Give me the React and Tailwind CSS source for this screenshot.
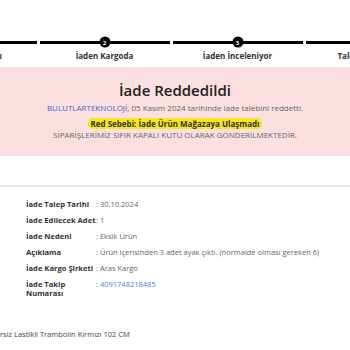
import React from 'react';

const STEPS = [
  { no: 1, label: 'Talebiniz Alındı' },
  { no: 2, label: 'İaden Kargoda' },
  { no: 3, label: 'İaden İnceleniyor' },
  { no: 4, label: 'Talep Reddedildi' },
];

const DETAILS = [
  { label: 'İade Talep Tarihi', value: '30.10.2024' },
  { label: 'İade Edilecek Adet', value: '1' },
  { label: 'İade Nedeni', value: 'Eksik Ürün' },
  { label: 'Açıklama', value: 'Ürün içerisinden 3 adet ayak çıktı. (normalde olması gereken 6)' },
  { label: 'İade Kargo Şirketi', value: 'Aras Kargo' },
  { label: 'İade Takip', label2: 'Numarası', value: '4091748218485', link: true },
];

const App = () => {
  return (
    <div className="w-[350px] h-[350px] overflow-hidden bg-white" style={{ fontFamily: '"Open Sans", "Liberation Sans", sans-serif' }}>
      {/* Stepper */}
      <div className="pt-[36px] h-[67px] overflow-hidden">
        <div className="flex ml-[-95px]">
          {STEPS.map(step => (
            <div key={step.no} className="w-[133px] shrink-0 flex flex-col items-center">
              <div className="relative w-full h-[12px] flex items-center px-[1.5px]">
                <div className="w-full h-[3px] bg-black"></div>
                <div className="absolute left-1/2 top-1/2 -translate-x-1/2 -translate-y-1/2 w-[11px] h-[11px] rounded-full bg-black flex items-center justify-center text-white text-[6px] font-bold leading-none">
                  {step.no}
                </div>
              </div>
              <span className="mt-[2px] text-[8px] font-bold text-[#333] leading-[11px] whitespace-nowrap">{step.label}</span>
            </div>
          ))}
        </div>
      </div>

      {/* Rejected box */}
      <div className="bg-[#fbdfe1] pt-[13px] pb-[16px] flex flex-col items-center text-center">
        <h2 className="text-[15px] font-semibold text-[#222] leading-[20px]">İade Reddedildi</h2>
        <p className="mt-[2px] text-[8px] text-[#666] leading-[11px]">
          <span className="text-[#4a66c8]">BULUTLARTEKNOLOJİ</span>, 05 Kasım 2024 tarihinde iade talebini reddetti.
        </p>
        <p className="mt-[5px] text-[8px] font-bold text-[#333] leading-[11px] bg-[#f6e71a] px-[3px] rounded-[5px]">
          Red Sebebi: İade Ürün Mağazaya Ulaşmadı
        </p>
        <p className="text-[8px] text-[#666] leading-[11px]">SİPARİŞLERİMİZ SIFIR KAPALI KUTU OLARAK GÖNDERİLMEKTEDİR.</p>
      </div>

      {/* Details */}
      <div className="mt-[29px] border-t-2 border-[#ececec] pt-[13px] pl-[26px] flex flex-col gap-[7px]">
        {DETAILS.map(row => (
          <div key={row.label} className="flex leading-[9px]">
            <span className="w-[70px] shrink-0 text-[7.6px] font-bold text-[#333] whitespace-nowrap">
              {row.label}
              {row.label2 && <><br />{row.label2}</>}
            </span>
            <span className="text-[7.5px] text-[#666]">
              : <span className={row.link ? 'text-[#4a7fd0]' : ''}>{row.value}</span>
            </span>
          </div>
        ))}
      </div>

      {/* Product */}
      <p className="mt-[31px] text-[7.5px] text-[#444] leading-[10px] whitespace-nowrap">rsiz Lastikli Trambolin Kırmızı 102 CM</p>
    </div>
  );
};

export default App;
